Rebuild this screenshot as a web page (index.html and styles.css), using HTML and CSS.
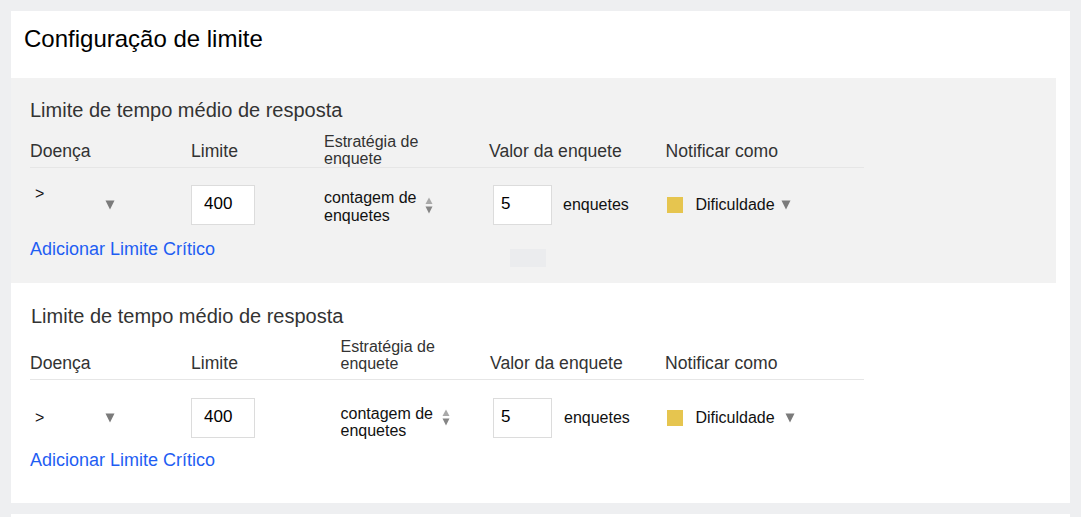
FILE: index.html
```html
<!DOCTYPE html>
<html lang="pt">
<head>
<meta charset="utf-8">
<title>Configuração de limite</title>
<link rel="stylesheet" href="styles.css">
</head>
<body>
<div class="page">
  <div class="card">
    <div class="card-head">
      <h1 class="card-title">Configuração de limite</h1>
    </div>

    <section class="rule rule--shaded">
      <h2 class="rule-title">Limite de tempo médio de resposta</h2>
      <div class="grid grid--a head">
        <div class="th">Doença</div>
        <div class="th">Limite</div>
        <div class="th th--two">Estratégia de<br>enquete</div>
        <div class="th">Valor da enquete</div>
        <div class="th">Notificar como</div>
      </div>
      <div class="grid grid--a row">
        <div class="cell disease">
          <span class="caret caret--top">&gt;</span>
          <svg class="tri" width="10" height="10" viewBox="0 0 10 10"><path d="M0.5 0.5 H9.5 L5 9.5 Z" fill="#7b7b7b"/></svg>
        </div>
        <div class="cell"><div class="box box--limit">400</div></div>
        <div class="cell strat">
          <span class="strat-text">contagem de<br>enquetes</span>
          <svg class="sort" width="8" height="17" viewBox="0 0 8 17"><path d="M0.5 7 L4 0.5 L7.5 7 Z" fill="#a9a9a9"/><path d="M0.5 9.5 H7.5 L4 16.5 Z" fill="#858585"/></svg>
        </div>
        <div class="cell value">
          <div class="box box--value">5</div>
          <span class="unit">enquetes</span>
        </div>
        <div class="cell notify">
          <span class="swatch"></span>
          <span class="level">Dificuldade</span>
          <svg class="tri tri--notify" width="10" height="10" viewBox="0 0 10 10"><path d="M0.5 0.5 H9.5 L5 9.5 Z" fill="#7b7b7b"/></svg>
        </div>
      </div>
      <div class="add-row">
        <a class="add" href="#">Adicionar Limite Crítico</a>
        <span class="ghost"></span>
      </div>
    </section>

    <section class="rule rule--plain">
      <h2 class="rule-title">Limite de tempo médio de resposta</h2>
      <div class="grid grid--b head">
        <div class="th">Doença</div>
        <div class="th">Limite</div>
        <div class="th th--two">Estratégia de<br>enquete</div>
        <div class="th">Valor da enquete</div>
        <div class="th">Notificar como</div>
      </div>
      <div class="grid grid--b row">
        <div class="cell disease">
          <span class="caret">&gt;</span>
          <svg class="tri" width="10" height="10" viewBox="0 0 10 10"><path d="M0.5 0.5 H9.5 L5 9.5 Z" fill="#7b7b7b"/></svg>
        </div>
        <div class="cell"><div class="box box--limit">400</div></div>
        <div class="cell strat">
          <span class="strat-text">contagem de<br>enquetes</span>
          <svg class="sort" width="8" height="17" viewBox="0 0 8 17"><path d="M0.5 7 L4 0.5 L7.5 7 Z" fill="#a9a9a9"/><path d="M0.5 9.5 H7.5 L4 16.5 Z" fill="#858585"/></svg>
        </div>
        <div class="cell value">
          <div class="box box--value">5</div>
          <span class="unit">enquetes</span>
        </div>
        <div class="cell notify">
          <span class="swatch"></span>
          <span class="level">Dificuldade</span>
          <svg class="tri tri--notify" width="10" height="10" viewBox="0 0 10 10"><path d="M0.5 0.5 H9.5 L5 9.5 Z" fill="#7b7b7b"/></svg>
        </div>
      </div>
      <div class="add-row">
        <a class="add" href="#">Adicionar Limite Crítico</a>
      </div>
    </section>
  </div>
  <div class="card card--next"></div>
</div>
</body>
</html>
```

FILE: styles.css
```css
* { box-sizing: border-box; }

html, body {
  margin: 0;
  padding: 0;
  background: #eeeff1;
  font-family: "Liberation Sans", Arial, Helvetica, sans-serif;
  color: #111;
}

.page {
  padding: 11px 11px 0 11px;
  display: flex;
  flex-direction: column;
  gap: 11px;
  height: 517px;
  overflow: hidden;
}

.card {
  background: #fff;
  width: 1059px;
  flex-shrink: 0;
}

.card--next {
  height: 40px;
}

.card-head {
  padding: 13.5px 13px 25.5px;
}

.card-title {
  margin: 0;
  font-size: 24px;
  line-height: 28px;
  font-weight: normal;
  color: #000;
}

.rule {
  padding-left: 19px;
}

.rule--shaded {
  background: #f2f2f2;
  margin-right: 14px;
  padding-top: 20px;
  padding-bottom: 23px;
}

.rule--plain {
  padding-top: 21px;
  padding-bottom: 32px;
}

.rule-title {
  margin: 0;
  font-size: 20px;
  line-height: 24px;
  font-weight: normal;
  color: #333;
}

.rule--plain .rule-title {
  padding-left: 1px;
}

.grid {
  display: grid;
  width: 834px;
}

.grid--a {
  grid-template-columns: 161px 133px 165px 176.5px 198.5px;
}

.grid--b {
  grid-template-columns: 161px 149.5px 149.5px 175px 199px;
}

.head {
  margin-top: 11px;
  border-bottom: 1px solid #e6e6e6;
  align-items: end;
}

.th {
  font-size: 17.6px;
  line-height: 22px;
  color: #333;
  padding-bottom: 5px;
}

.rule--plain .th {
  padding-bottom: 4.5px;
}

.th--two {
  font-size: 16px;
  line-height: 17px;
  padding-bottom: 0;
}

.rule--plain .th--two {
  line-height: 16.5px;
  padding-bottom: 6.5px;
}

.row {
  margin-top: 17px;
  height: 40px;
}

.cell {
  display: flex;
  align-items: center;
  font-size: 16px;
  line-height: 18px;
  color: #111;
}

.disease .caret {
  width: 75px;
  padding-left: 5px;
  font-size: 16px;
  color: #111;
}

.caret--top {
  align-self: flex-start;
}

.tri {
  display: block;
  flex-shrink: 0;
}

.box {
  height: 40px;
  background: #fff;
  border: 1px solid #dcdcdc;
  font-size: 17px;
  line-height: 35px;
  padding-bottom: 3px;
  color: #000;
}

.box--limit {
  width: 64px;
  padding-left: 12px;
}

.box--value {
  width: 59px;
  padding-left: 7px;
  margin-left: 4px;
}

.rule--plain .box--value {
  margin-left: 3px;
}

.strat-text {
  width: 101px;
  align-self: flex-start;
  margin-top: 4px;
  line-height: 18px;
}

.rule--plain .strat-text {
  margin-top: 8px;
  line-height: 17px;
}

.sort {
  display: block;
  flex-shrink: 0;
}

.unit {
  margin-left: 11px;
}

.rule--plain .unit {
  margin-left: 12px;
}

.swatch {
  width: 16px;
  height: 16px;
  margin-left: 1px;
  background: #e6c54f;
  flex-shrink: 0;
}

.rule--plain .swatch {
  margin-left: 1.5px;
}

.level {
  margin-left: 13px;
}

.tri--notify {
  margin-left: 6.5px;
}

.rule--plain .tri--notify {
  margin-left: 10.5px;
}

.add-row {
  display: flex;
  align-items: flex-start;
  height: 22px;
  margin-top: 13px;
}

.rule--plain .add-row {
  margin-top: 12px;
}

.add {
  font-size: 18px;
  line-height: 22px;
  color: #1f5ef3;
  text-decoration: none;
}

.ghost {
  flex-shrink: 0;
  width: 36px;
  height: 18.5px;
  margin-top: 10.5px;
  margin-left: 295px;
  background: #ebecee;
}
```
